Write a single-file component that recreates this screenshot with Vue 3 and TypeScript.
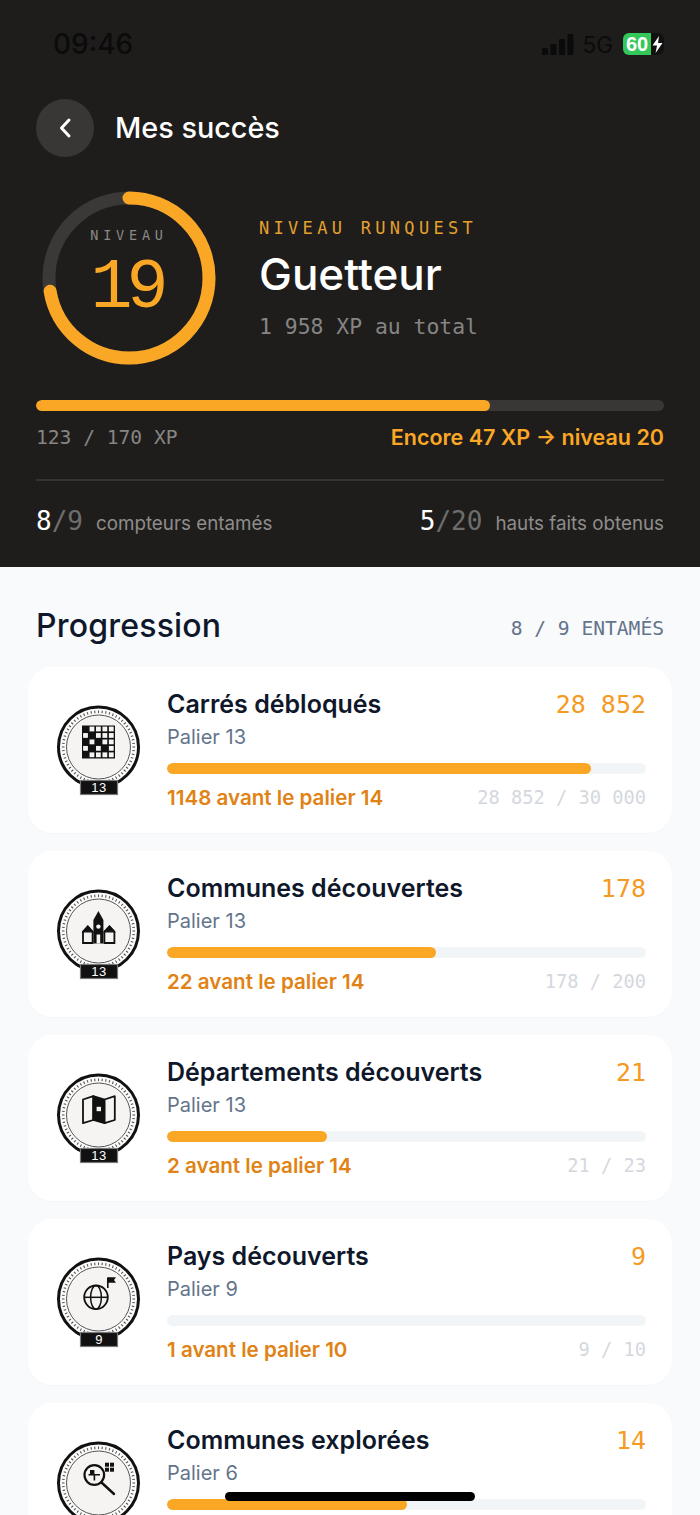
<template>
  <div class="screen">
    <header class="hero">
      <div class="status">
        <span class="time">09:46</span>
        <div class="status-right">
          <svg class="signal" width="32" height="21" viewBox="0 0 32 21">
            <rect x="0" y="14" width="6" height="7" rx="1.2" />
            <rect x="8.5" y="10" width="6" height="11" rx="1.2" />
            <rect x="17" y="5" width="6" height="16" rx="1.2" />
            <rect x="25.5" y="0" width="6" height="21" rx="1.2" />
          </svg>
          <span class="net">5G</span>
          <div class="battery">
            <span>60</span>
            <svg width="11" height="17" viewBox="0 0 11 17"><path d="M7 0 L0.5 9.5 H5 L3.6 17 L10.5 7 H6 Z" fill="#fff" /></svg>
          </div>
        </div>
      </div>

      <div class="nav">
        <button class="back" type="button">
          <svg width="16" height="22" viewBox="0 0 16 22"><path d="M12 3 L4.5 11 L12 19" fill="none" stroke="#fff" stroke-width="3" stroke-linecap="round" stroke-linejoin="round" /></svg>
        </button>
        <h1>Mes succès</h1>
      </div>

      <div class="level">
        <div class="ring">
          <svg width="174" height="174" viewBox="0 0 174 174">
            <circle cx="87" cy="87" r="80" fill="none" stroke="#3a3938" stroke-width="13" />
            <circle cx="87" cy="87" r="80" fill="none" stroke="#fba726" stroke-width="13" stroke-linecap="round" pathLength="100" stroke-dasharray="72.35 100" transform="rotate(-90 87 87)" />
          </svg>
          <div class="ring-text">
            <span class="ring-label">NIVEAU</span>
            <span class="ring-num">19</span>
          </div>
        </div>
        <div class="level-info">
          <div class="eyebrow">NIVEAU RUNQUEST</div>
          <div class="rank">Guetteur</div>
          <div class="total">1 958 XP au total</div>
        </div>
      </div>

      <div class="xp-bar"><div class="xp-fill"></div></div>
      <div class="xp-row">
        <span class="xp-count">123 / 170 XP</span>
        <span class="xp-left">Encore 47 XP → niveau 20</span>
      </div>

      <div class="stats">
        <div class="stat">
          <span class="frac"><b>8</b>/9</span>
          <span class="stat-label">compteurs entamés</span>
        </div>
        <div class="stat">
          <span class="frac"><b>5</b>/20</span>
          <span class="stat-label">hauts faits obtenus</span>
        </div>
      </div>
    </header>

    <main class="content">
      <div class="section-head">
        <h2>Progression</h2>
        <span class="section-meta">8 / 9 ENTAMÉS</span>
      </div>

      <div class="cards">
        <article v-for="c in counters" :key="c.title" class="card">
          <svg class="badge" width="90" height="100" viewBox="0 0 90 100">
            <circle cx="44.5" cy="47" r="40" fill="#fdfcfb" stroke="#111" stroke-width="3" />
            <line v-for="a in ticks" :key="a" x1="44.5" y1="10.4" x2="44.5" y2="13" stroke="#555" stroke-width="1.1" :transform="`rotate(${a} 44.5 47)`" />
            <circle cx="44.5" cy="47" r="32" fill="#f5f4f3" stroke="#555" stroke-width="1" />

            <g v-if="c.icon === 'grid'">
              <rect x="28" y="25.5" width="33" height="33" fill="#111" />
              <rect v-for="s in gridCells" :key="s.x + '-' + s.y" :x="29.1 + s.x * 6.45" :y="26.6 + s.y * 6.45" width="4.8" height="4.8" fill="#f5f4f3" />
            </g>

            <g v-else-if="c.icon === 'town'">
              <path d="M44.4 27 L49.4 36 V59.5 H39.4 V36 Z" fill="#111" />
              <circle cx="44.4" cy="42.6" r="2.2" fill="#f5f4f3" />
              <rect x="42.6" y="50.5" width="3.6" height="9" fill="#f5f4f3" />
              <path d="M29 59 V47.5 L33.8 42.4 L38.6 47.5 V59 Z" fill="#f5f4f3" stroke="#111" stroke-width="1.8" />
              <path d="M29 47.8 L33.8 42.4 L38.6 47.8 Z" fill="#111" stroke="#111" stroke-width="1.2" />
              <path d="M50.4 59 V47.5 L55.5 42.4 L60.4 47.5 V59 Z" fill="#f5f4f3" stroke="#111" stroke-width="1.8" />
              <path d="M50.4 47.8 L55.5 42.4 L60.4 47.8 Z" fill="#111" stroke="#111" stroke-width="1.2" />
            </g>

            <g v-else-if="c.icon === 'map'">
              <path d="M29 31.5 L39.3 28.2 V52 L29 55.2 Z" fill="#f5f4f3" stroke="#111" stroke-width="1.8" stroke-linejoin="round" />
              <path d="M39.3 28.2 L50.6 31.5 V55.2 L39.3 52 Z" fill="#111" stroke="#111" stroke-width="1.8" stroke-linejoin="round" />
              <path d="M50.6 31.5 L60.8 28.2 V52 L50.6 55.2 Z" fill="#f5f4f3" stroke="#111" stroke-width="1.8" stroke-linejoin="round" />
              <rect x="42.6" y="38.8" width="4.4" height="4.4" fill="#f5f4f3" />
            </g>

            <g v-else-if="c.icon === 'globe'" fill="none" stroke="#111" stroke-width="1.5">
              <circle cx="42" cy="45.3" r="11.8" stroke-width="1.8" />
              <ellipse cx="42" cy="45.3" rx="5.4" ry="11.8" />
              <line x1="30.2" y1="45.3" x2="53.8" y2="45.3" />
              <line x1="53.8" y1="36" x2="53.8" y2="25.5" stroke-width="1.6" />
              <path d="M53.8 25.3 H62 L60 28 L62 30.7 H53.8 Z" fill="#111" stroke="none" />
            </g>

            <g v-else>
              <circle cx="40.3" cy="39" r="9.8" fill="none" stroke="#111" stroke-width="2.2" />
              <line x1="47.5" y1="46.5" x2="60" y2="58" stroke="#111" stroke-width="2.4" stroke-linecap="round" />
              <path d="M36 34 H40.4 V38 H46 V39.4 H41.2 V44.5 H39.6 V39.4 H34.5 V38 H36 Z" fill="#111" />
              <rect x="51" y="26.7" width="4" height="4" fill="#111" />
              <rect x="56" y="26.7" width="4" height="4" fill="#111" />
              <rect x="51" y="31.7" width="4" height="4" fill="#111" />
              <rect x="56" y="31.7" width="4" height="4" fill="#111" />
            </g>

            <rect x="26.5" y="80.5" width="37" height="14" fill="#111" stroke="#777" stroke-width="1.2" />
            <text x="45" y="92" text-anchor="middle" class="badge-num">{{ c.tier }}</text>
          </svg>

          <div class="card-body">
            <div class="card-top">
              <span class="card-title">{{ c.title }}</span>
              <span class="card-value">{{ c.value }}</span>
            </div>
            <div class="card-tier">Palier {{ c.tier }}</div>
            <div class="bar"><div class="bar-fill" :style="{ width: c.pct + '%' }"></div></div>
            <div class="card-bottom">
              <span v-if="c.left" class="card-note">{{ c.left }} avant le palier {{ c.tier + 1 }}</span>
              <span v-if="c.range" class="card-range">{{ c.range }}</span>
            </div>
          </div>
        </article>
      </div>
    </main>

    <div class="home-indicator"></div>
  </div>
</template>

<script setup lang="ts">
interface Counter {
  title: string
  tier: number
  value: string
  left?: string
  range?: string
  pct: number
  icon: 'grid' | 'town' | 'map' | 'globe' | 'search'
}

const counters: Counter[] = [
  { title: 'Carrés débloqués', tier: 13, value: '28 852', left: '1148', range: '28 852 / 30 000', pct: 88.5, icon: 'grid' },
  { title: 'Communes découvertes', tier: 13, value: '178', left: '22', range: '178 / 200', pct: 56.2, icon: 'town' },
  { title: 'Départements découverts', tier: 13, value: '21', left: '2', range: '21 / 23', pct: 33.4, icon: 'map' },
  { title: 'Pays découverts', tier: 9, value: '9', left: '1', range: '9 / 10', pct: 0, icon: 'globe' },
  // last card runs off the screen, its bottom row is never visible
  { title: 'Communes explorées', tier: 6, value: '14', pct: 50, icon: 'search' },
]

const ticks: number[] = Array.from({ length: 60 }, (_, i) => i * 6)

const blackCells = ['0-0', '1-1', '0-2', '2-2', '1-3', '3-3', '0-4']
const gridCells: { x: number; y: number }[] = []
for (let y = 0; y < 5; y++) {
  for (let x = 0; x < 5; x++) {
    if (!blackCells.includes(`${x}-${y}`)) gridCells.push({ x, y })
  }
}
</script>

<style>
html, body { margin: 0; background: #f8fafc; }
</style>

<style scoped>
.screen {
  position: relative;
  width: 700px;
  height: 1515px;
  overflow: hidden;
  background: #f8fafc;
  font-family: Inter, "Noto Sans", sans-serif;
}
.hero {
  height: 567px;
  box-sizing: border-box;
  padding: 0 36px;
  background: #1e1d1c;
  color: #fff;
}
.status {
  height: 88px;
  display: flex;
  align-items: center;
  justify-content: space-between;
  padding: 0 0 0 17px;
  color: #0b0b0b;
}
.time { font-size: 28px; font-weight: 500; }
.status-right { display: flex; align-items: center; }
.signal { fill: #0b0b0b; margin-right: 9px; }
.net { font-size: 22.5px; margin-right: 10px; }
.battery {
  width: 41px;
  height: 22px;
  display: flex;
  align-items: center;
  justify-content: space-between;
  box-sizing: border-box;
  padding: 0 1px 0 3px;
  border-radius: 6px;
  background: linear-gradient(90deg, #34c759 0 28px, #111 28px);
  color: #fff;
  font-size: 20px;
  font-weight: 700;
  font-family: "Liberation Sans", sans-serif;
}
.nav {
  height: 58px;
  margin-top: 11px;
  display: flex;
  align-items: center;
  gap: 21px;
}
.back {
  width: 58px;
  height: 58px;
  padding: 0;
  border: 0;
  border-radius: 50%;
  background: #383736;
  display: flex;
  align-items: center;
  justify-content: center;
}
h1 { margin: -2px 0 0; font-size: 28.8px; font-weight: 500; }
.level {
  margin-top: 34px;
  margin-left: 6px;
  display: flex;
  align-items: center;
  gap: 43px;
}
.ring { position: relative; width: 174px; height: 174px; }
.ring svg { display: block; }
.ring-text {
  position: absolute;
  inset: 0;
  display: flex;
  flex-direction: column;
  align-items: center;
}
.ring-label {
  margin-top: 36px;
  font-family: "DejaVu Sans Mono", monospace;
  font-size: 13.5px;
  letter-spacing: 4.8px;
  color: #8a8987;
}
.ring-num {
  margin-top: 8px;
  margin-left: -5px;
  font-family: "Liberation Mono", monospace;
  font-size: 70px;
  line-height: 76px;
  letter-spacing: -6px;
  color: #fba726;
}
.level-info { display: flex; flex-direction: column; margin-top: 1px; }
.eyebrow {
  font-family: "DejaVu Sans Mono", monospace;
  font-size: 17px;
  letter-spacing: 4.3px;
  color: #e3a02e;
}
.rank { margin-top: 10px; font-size: 44px; line-height: 52px; font-weight: 500; }
.total {
  margin-top: 14px;
  font-family: "DejaVu Sans Mono", monospace;
  font-size: 21.4px;
  color: #868584;
}
.xp-bar {
  height: 11px;
  margin-top: 35px;
  border-radius: 6px;
  background: #383736;
  overflow: hidden;
}
.xp-fill { width: 72.35%; height: 100%; border-radius: 6px; background: #fba726; }
.xp-row {
  margin-top: 13px;
  height: 26px;
  display: flex;
  align-items: center;
  justify-content: space-between;
}
.xp-count {
  font-family: "DejaVu Sans Mono", monospace;
  font-size: 19.6px;
  color: #868584;
}
.xp-left { font-size: 21.5px; font-weight: 600; color: #fba726; }
.stats {
  margin-top: 29px;
  padding-top: 25px;
  border-top: 2px solid #353433;
  display: flex;
  justify-content: space-between;
}
.stat { display: flex; align-items: baseline; gap: 13px; }
.frac {
  font-family: "DejaVu Sans Mono", monospace;
  font-size: 26px;
  color: #6e6d6c;
}
.frac b { font-weight: 400; color: #fff; }
.stat-label { font-size: 18.8px; color: #8e8d8b; }
.content { padding: 0 28px; }
.section-head {
  height: 100px;
  box-sizing: border-box;
  padding: 16px 8px 0;
  display: flex;
  align-items: center;
  justify-content: space-between;
}
h2 { margin: 0; font-size: 32px; font-weight: 500; color: #0f172a; letter-spacing: 0.2px; }
.section-meta {
  margin-top: 6px;
  font-family: "DejaVu Sans Mono", monospace;
  font-size: 19.6px;
  color: #64748b;
}
.cards { display: flex; flex-direction: column; gap: 18px; }
.card {
  height: 166px;
  box-sizing: border-box;
  padding: 0 26px;
  display: flex;
  align-items: center;
  gap: 23px;
  border-radius: 24px;
  background: #fff;
  box-shadow: 0 1px 3px rgba(15, 23, 42, 0.02);
}
.badge { flex: none; }
.badge-num {
  font-family: "Liberation Sans", sans-serif;
  font-size: 13px;
  letter-spacing: 0.5px;
  fill: #fff;
}
.card-body { flex: 1; min-width: 0; }
.card-top { display: flex; align-items: baseline; justify-content: space-between; height: 34px; }
.card-title { font-size: 25px; font-weight: 600; color: #0f172a; }
.card-value {
  font-family: "DejaVu Sans Mono", monospace;
  font-size: 25px;
  color: #f59a23;
}
.card-tier { margin-top: -1px; height: 30px; font-size: 20px; line-height: 30px; color: #64748b; }
.bar {
  height: 11px;
  margin-top: 11px;
  border-radius: 6px;
  background: #f1f5f7;
  overflow: hidden;
}
.bar-fill { height: 100%; border-radius: 6px; background: #fba726; }
.card-bottom {
  margin-top: 10px;
  display: flex;
  align-items: center;
  justify-content: space-between;
  height: 28px;
}
.card-note { font-size: 20.6px; font-weight: 600; color: #e08214; }
.card-range {
  font-family: "DejaVu Sans Mono", monospace;
  font-size: 18.7px;
  color: #d4d8de;
}
.home-indicator {
  position: absolute;
  left: 225px;
  top: 1492px;
  width: 250px;
  height: 9px;
  border-radius: 5px;
  background: #000;
}
</style>
